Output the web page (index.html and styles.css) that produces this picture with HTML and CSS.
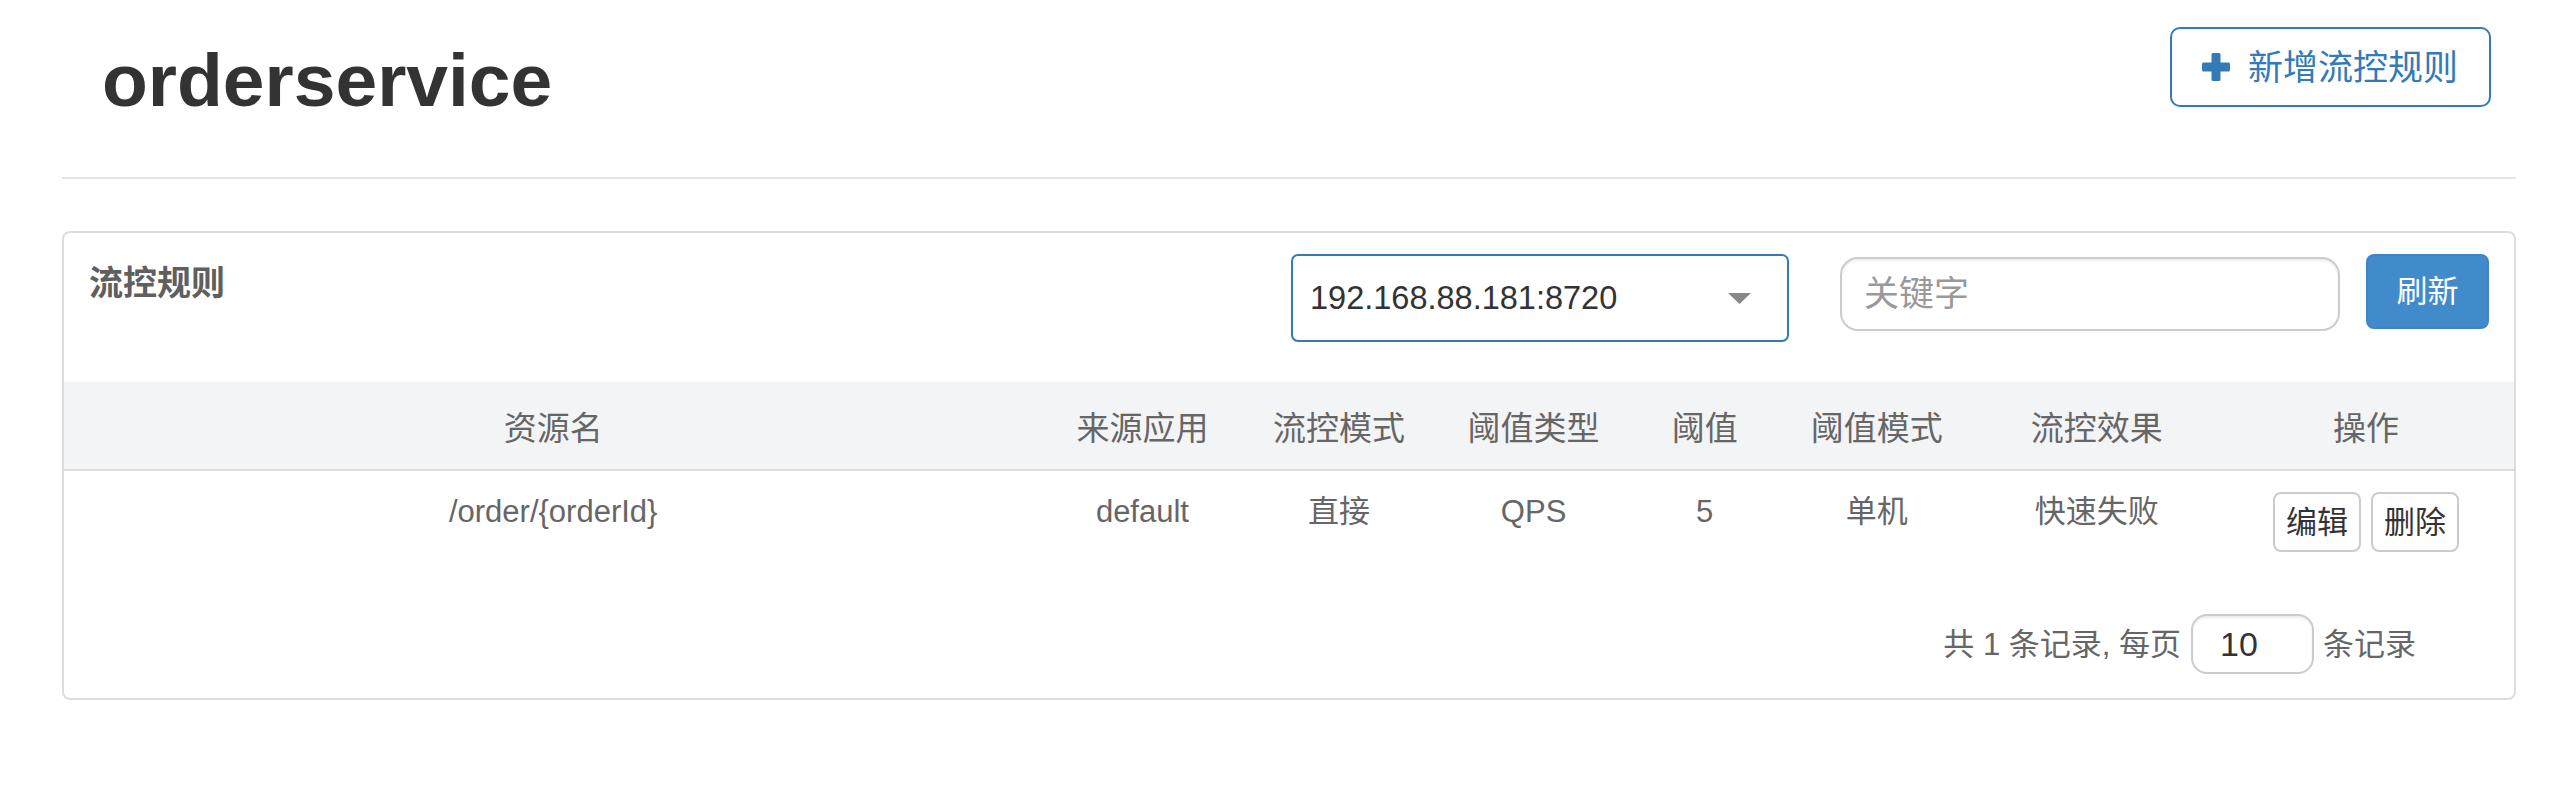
FILE: index.html
```html
<!DOCTYPE html>
<html lang="zh-CN">
<head>
<meta charset="utf-8">
<title>orderservice</title>
<link rel="stylesheet" href="styles.css">
</head>
<body>
<div class="page">
  <header class="page-header">
    <h1 class="title">orderservice</h1>
    <button class="btn-add" type="button">
      <svg class="icon-plus" width="28" height="28" viewBox="0 0 28 28" aria-hidden="true">
        <rect x="0" y="9.5" width="28" height="9" rx="1.5"></rect>
        <rect x="9.5" y="0" width="9" height="28" rx="1.5"></rect>
      </svg>
      <span>新增流控规则</span>
    </button>
  </header>

  <section class="card">
    <div class="card-head">
      <h2 class="card-title">流控规则</h2>
      <div class="machine-select">
        <span>192.168.88.181:8720</span>
        <svg class="caret" width="23" height="11" viewBox="0 0 23 11" aria-hidden="true"><polygon points="0,0 23,0 11.5,11"></polygon></svg>
      </div>
      <input class="search" type="text" placeholder="关键字">
      <button class="btn-refresh" type="button">刷新</button>
    </div>

    <table class="rules">
      <colgroup>
        <col class="c-res"><col class="c-app"><col class="c-mode"><col class="c-type">
        <col class="c-val"><col class="c-cluster"><col class="c-effect"><col class="c-ops">
      </colgroup>
      <thead>
        <tr>
          <th>资源名</th><th>来源应用</th><th>流控模式</th><th>阈值类型</th>
          <th>阈值</th><th>阈值模式</th><th>流控效果</th><th>操作</th>
        </tr>
      </thead>
      <tbody>
        <tr>
          <td>/order/{orderId}</td><td>default</td><td>直接</td><td>QPS</td>
          <td>5</td><td>单机</td><td>快速失败</td>
          <td class="ops"><div class="ops-inner"><button class="btn-op" type="button">编辑</button><button class="btn-op" type="button">删除</button></div></td>
        </tr>
      </tbody>
    </table>

    <div class="pager">
      <span>共 1 条记录, 每页</span>
      <input class="page-size" type="text" value="10">
      <span>条记录</span>
    </div>
  </section>
</div>
</body>
</html>
```

FILE: styles.css
```css
* { box-sizing: border-box; }

html, body {
  margin: 0;
  padding: 0;
  background: #fff;
}

body {
  font-family: "Liberation Sans", "Noto Sans CJK SC", sans-serif;
  color: #666;
}

.page {
  padding: 0 54px 0 62px;
}

/* ---------- page header ---------- */
.page-header {
  display: flex;
  justify-content: space-between;
  align-items: flex-start;
  height: 179px;
  border-bottom: 2px solid #e5e5e5;
}

.title {
  margin: 43px 0 0 40px;
  font-size: 75px;
  line-height: 1;
  font-weight: 700;
  color: #333;
}

.btn-add {
  display: flex;
  align-items: center;
  height: 80px;
  margin: 27px 25px 0 0;
  padding: 0 31px 0 30px;
  border: 2px solid #337ab7;
  border-radius: 10px;
  background: #fff;
  color: #337ab7;
  font-family: inherit;
  font-size: 35px;
  line-height: 1;
  cursor: pointer;
}

.icon-plus {
  fill: #337ab7;
  margin-right: 18px;
  flex: none;
}

/* ---------- card ---------- */
.card {
  margin-top: 52px;
  border: 2px solid #ddd;
  border-radius: 8px;
  background: #fff;
}

.card-head {
  display: flex;
  align-items: flex-start;
  height: 149px;
  padding: 21px 25px 0 25px;
}

.card-title {
  flex: 1;
  margin: 12px 0 0 0;
  font-size: 34px;
  line-height: 1;
  font-weight: 700;
  color: #5f5f5f;
}

.machine-select {
  display: flex;
  justify-content: space-between;
  align-items: center;
  width: 498px;
  height: 88px;
  padding: 0 36px 0 17px;
  border: 2px solid #337ab7;
  border-radius: 7px;
  font-size: 32.5px;
  color: #333;
}

.caret {
  fill: #888;
}

.search {
  width: 500px;
  height: 74px;
  margin: 3px 0 0 51px;
  padding: 0 22px;
  border: 2px solid #ccc;
  border-radius: 18px;
  box-shadow: inset 0 2px 2px rgba(0, 0, 0, 0.075);
  font-family: inherit;
  font-size: 35px;
  color: #555;
  outline: none;
}

.search::placeholder {
  color: #999;
}

.btn-refresh {
  width: 123px;
  height: 75px;
  margin-left: 26px;
  padding: 0;
  border: 2px solid #3f86c4;
  border-radius: 8px;
  background: #428bca;
  color: #fff;
  font-family: inherit;
  font-size: 31px;
  line-height: 1;
  cursor: pointer;
}

/* ---------- table ---------- */
.rules {
  width: 100%;
  border-collapse: collapse;
  table-layout: fixed;
}

.c-res { width: 978px; }
.c-app { width: 200px; }
.c-mode { width: 193px; }
.c-type { width: 196px; }
.c-val { width: 146px; }
.c-cluster { width: 198px; }
.c-effect { width: 242px; }
.c-ops { width: 296px; }

.rules th {
  height: 88px;
  padding: 0;
  background: #f3f4f6;
  border-bottom: 2px solid #ddd;
  font-size: 33px;
  font-weight: 400;
  color: #666;
  text-align: center;
  vertical-align: middle;
}

.rules td {
  padding: 19px 0 19px;
  font-size: 31px;
  line-height: 43px;
  color: #666;
  text-align: center;
  vertical-align: top;
}

.rules td.ops {
  padding-top: 21px;
}

.ops-inner {
  display: flex;
  justify-content: center;
  gap: 10px;
}

.btn-op {
  width: 88px;
  height: 60px;
  padding: 0;
  border: 2px solid #ccc;
  border-radius: 8px;
  background: #fff;
  color: #333;
  font-family: inherit;
  font-size: 31px;
  line-height: 1;
  cursor: pointer;
}

/* ---------- pager ---------- */
.pager {
  display: flex;
  justify-content: flex-end;
  align-items: center;
  padding: 43px 98px 24px 0;
  font-size: 31px;
  line-height: 43px;
  color: #666;
}

.page-size {
  width: 123px;
  height: 60px;
  margin: 0 9px 0 10px;
  padding: 0 0 0 27px;
  border: 2px solid #ccc;
  border-radius: 16px;
  box-shadow: inset 0 2px 2px rgba(0, 0, 0, 0.075);
  font-family: inherit;
  font-size: 34px;
  color: #333;
  outline: none;
}
```
